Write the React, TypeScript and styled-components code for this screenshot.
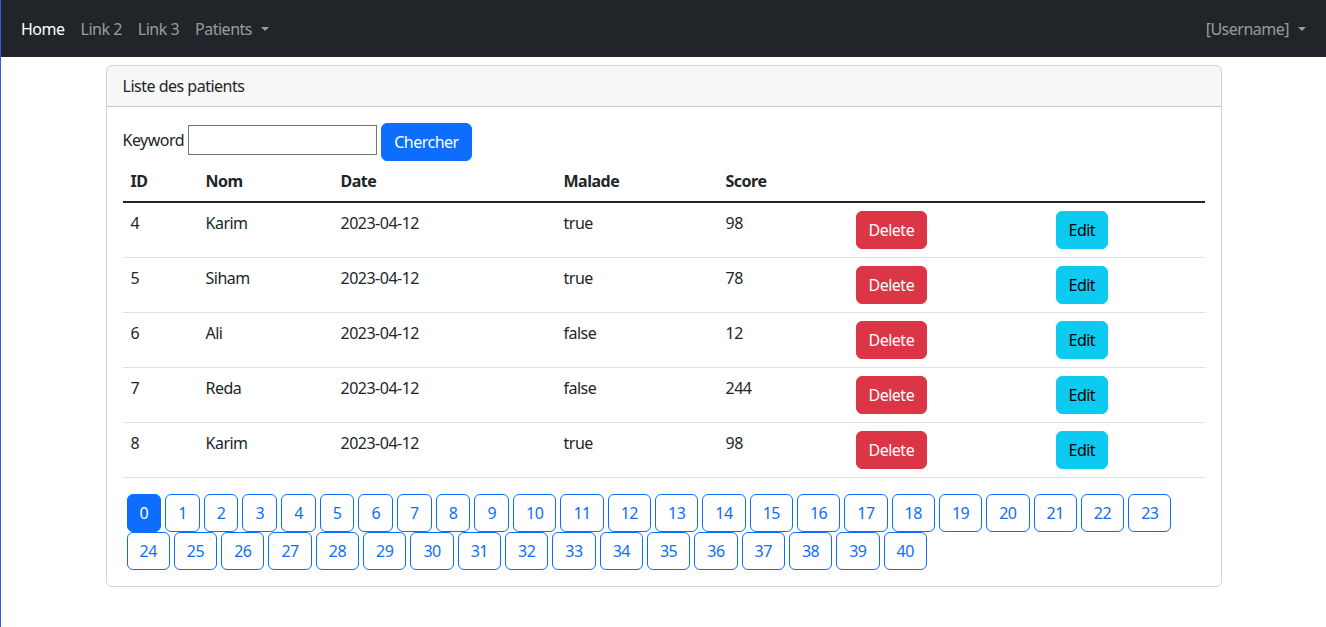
import styled, { createGlobalStyle } from "styled-components";

const GlobalStyle = createGlobalStyle`
    * { box-sizing: border-box; }
    body {
        margin: 0;
        font-family: "Noto Sans", "Open Sans", sans-serif;
        font-size: 16px;
        line-height: 1.5;
        letter-spacing: -0.5px;
        color: #212529;
        background: #fff;
    }
`;

const Page = styled.div`
    min-height: 100vh;
    border-left: 1px solid #2f5fe0;
`;

const Navbar = styled.nav`
    height: 57px;
    background: #212529;
    display: flex;
    align-items: center;
    justify-content: space-between;
    padding: 0 12px;
`;

const NavList = styled.div`
    display: flex;
    align-items: center;
`;

const NavLink = styled.a<{ $active?: boolean }>`
    padding: 8px;
    color: ${(p) => (p.$active ? "#fff" : "rgba(255, 255, 255, 0.55)")};
    text-decoration: none;
    cursor: pointer;
`;

const Caret = styled.span`
    display: inline-block;
    margin-left: 9px;
    vertical-align: 4px;
    border-top: 4px solid;
    border-right: 4px solid transparent;
    border-left: 4px solid transparent;
`;

const Container = styled.div`
    max-width: 1140px;
    margin: 0 auto;
    padding: 0 12px;
`;

const Card = styled.div`
    margin-top: 8px;
    border: 1px solid rgba(0, 0, 0, 0.175);
    border-radius: 6px;
    overflow: hidden;
`;

const CardHeader = styled.div`
    padding: 8px 16px;
    background: rgba(0, 0, 0, 0.03);
    border-bottom: 1px solid rgba(0, 0, 0, 0.175);
`;

const CardBody = styled.div`
    padding: 16px;
`;

const SearchRow = styled.div`
    display: flex;
    align-items: flex-start;
    gap: 4px;
`;

const SearchLabel = styled.label`
    margin-top: 5px;
`;

const SearchInput = styled.input`
    width: 189px;
    height: 30px;
    margin-top: 2px;
    font: inherit;
    padding: 1px 2px;
    border: 1px solid #767676;
    border-radius: 0;
`;

const Button = styled.button<{ $variant: "primary" | "danger" | "info" }>`
    font: inherit;
    letter-spacing: inherit;
    padding: 6px 12px;
    border-radius: 6px;
    border: 1px solid transparent;
    cursor: pointer;
    background: ${(p) =>
        p.$variant === "primary" ? "#0d6efd" : p.$variant === "danger" ? "#dc3545" : "#0dcaf0"};
    border-color: ${(p) =>
        p.$variant === "primary" ? "#0d6efd" : p.$variant === "danger" ? "#dc3545" : "#0dcaf0"};
    color: ${(p) => (p.$variant === "info" ? "#000" : "#fff")};
`;

const Table = styled.table`
    width: 100%;
    table-layout: fixed;
    border-collapse: collapse;
    margin-bottom: 16px;
`;

const Th = styled.th<{ $w: number }>`
    width: ${(p) => p.$w}px;
    padding: 8px;
    text-align: left;
    font-weight: 700;
    border-bottom: 2px solid #212529;
`;

const Td = styled.td`
    padding: 8px;
    vertical-align: top;
    border-bottom: 1px solid #dee2e6;
`;

const Pages = styled.div`
    display: flex;
    flex-wrap: wrap;
`;

const PageButton = styled.button<{ $active?: boolean }>`
    font: inherit;
    letter-spacing: inherit;
    margin-left: 4px;
    padding: 6px 12px;
    border-radius: 6px;
    border: 1px solid #0d6efd;
    background: ${(p) => (p.$active ? "#0d6efd" : "#fff")};
    color: ${(p) => (p.$active ? "#fff" : "#0d6efd")};
    cursor: pointer;
`;

const columns = [
    { label: "ID", w: 75 },
    { label: "Nom", w: 135 },
    { label: "Date", w: 223 },
    { label: "Malade", w: 162 },
    { label: "Score", w: 130 },
    { label: "", w: 200 },
    { label: "", w: 157 },
];

const patients = [
    { id: 4, nom: "Karim", date: "2023-04-12", malade: true, score: 98 },
    { id: 5, nom: "Siham", date: "2023-04-12", malade: true, score: 78 },
    { id: 6, nom: "Ali", date: "2023-04-12", malade: false, score: 12 },
    { id: 7, nom: "Reda", date: "2023-04-12", malade: false, score: 244 },
    { id: 8, nom: "Karim", date: "2023-04-12", malade: true, score: 98 },
];

const pages = Array.from({ length: 41 }, (_, i) => i);

export default function App() {
    return (
        <>
            <GlobalStyle />
            <Page>
                <Navbar>
                    <NavList>
                        <NavLink $active>Home</NavLink>
                        <NavLink>Link 2</NavLink>
                        <NavLink>Link 3</NavLink>
                        <NavLink>Patients<Caret /></NavLink>
                    </NavList>
                    <NavList>
                        <NavLink>[Username]<Caret /></NavLink>
                    </NavList>
                </Navbar>
                <Container>
                    <Card>
                        <CardHeader>Liste des patients</CardHeader>
                        <CardBody>
                            <SearchRow>
                                <SearchLabel>Keyword</SearchLabel>
                                <SearchInput type="text" />
                                <Button $variant="primary">Chercher</Button>
                            </SearchRow>
                            <Table>
                                <thead>
                                    <tr>
                                        {columns.map((c, i) => (
                                            <Th key={i} $w={c.w}>{c.label}</Th>
                                        ))}
                                    </tr>
                                </thead>
                                <tbody>
                                    {patients.map((p) => (
                                        <tr key={p.id}>
                                            <Td>{p.id}</Td>
                                            <Td>{p.nom}</Td>
                                            <Td>{p.date}</Td>
                                            <Td>{String(p.malade)}</Td>
                                            <Td>{p.score}</Td>
                                            <Td><Button $variant="danger">Delete</Button></Td>
                                            <Td><Button $variant="info">Edit</Button></Td>
                                        </tr>
                                    ))}
                                </tbody>
                            </Table>
                            <Pages>
                                {pages.map((n) => (
                                    <PageButton key={n} $active={n === 0}>{n}</PageButton>
                                ))}
                            </Pages>
                        </CardBody>
                    </Card>
                </Container>
            </Page>
        </>
    );
}
